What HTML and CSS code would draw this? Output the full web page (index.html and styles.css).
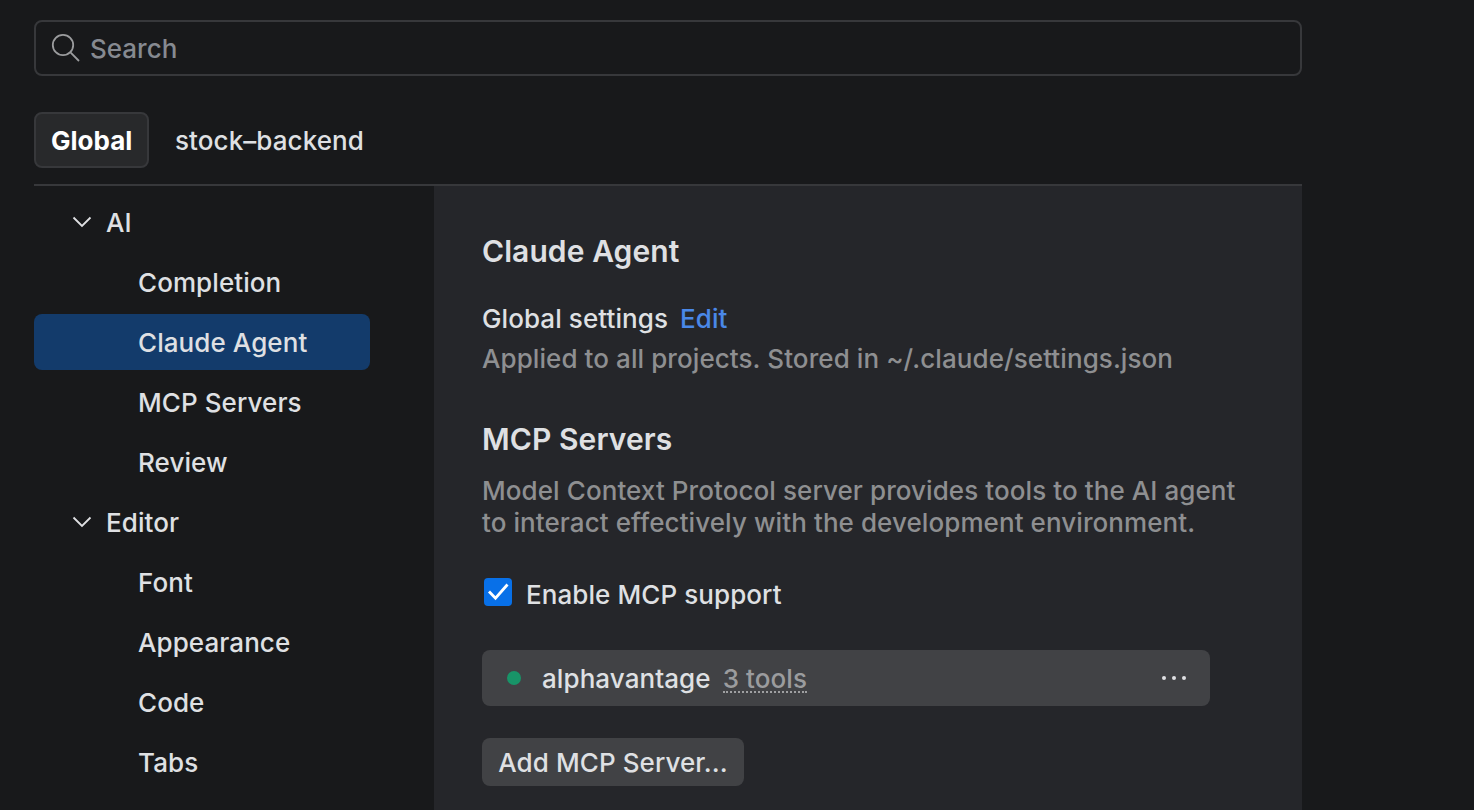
FILE: index.html
```
<!DOCTYPE html>
<html lang="en">
<head>
    <meta charset="UTF-8">
    <meta name="viewport" content="width=device-width, initial-scale=1.0">
    <title>Settings</title>
    <link rel="stylesheet" href="styles.css">
</head>
<body>
    <div class="settings">
        <label class="search">
            <svg class="search-icon" width="32" height="32" viewBox="0 0 32 32">
                <circle cx="13" cy="13" r="10.2"/>
                <path d="M20.2 20.2L29 29"/>
            </svg>
            <input type="text" placeholder="Search">
        </label>
        <nav class="scopes">
            <a class="scope active">Global</a>
            <a class="scope">stock–backend</a>
        </nav>
        <div class="main">
            <div class="tree">
                <div class="row group">
                    <svg class="chevron" width="20" height="12" viewBox="0 0 20 12"><path d="M1.5 1.5L10 10L18.5 1.5"/></svg>
                    <span>AI</span>
                </div>
                <div class="row">Completion</div>
                <div class="row selected">Claude Agent</div>
                <div class="row">MCP Servers</div>
                <div class="row">Review</div>
                <div class="row group">
                    <svg class="chevron" width="20" height="12" viewBox="0 0 20 12"><path d="M1.5 1.5L10 10L18.5 1.5"/></svg>
                    <span>Editor</span>
                </div>
                <div class="row">Font</div>
                <div class="row">Appearance</div>
                <div class="row">Code</div>
                <div class="row">Tabs</div>
            </div>
            <div class="page">
                <h2>Claude Agent</h2>
                <p class="setting">Global settings <a class="link">Edit</a></p>
                <p class="hint path">Applied to all projects. Stored in ~/.claude/settings.json</p>
                <h2>MCP Servers</h2>
                <p class="hint">Model Context Protocol server provides tools to the AI agent<br>to interact effectively with the development environment.</p>
                <div class="check">
                    <span class="checkbox">
                        <svg width="28" height="28" viewBox="0 0 28 28"><path d="M5 13.5L11.5 20.2L23.5 6.5"/></svg>
                    </span>
                    <span>Enable MCP support</span>
                </div>
                <div class="server">
                    <span class="status"></span>
                    <span class="name">alphavantage</span>
                    <span class="tools">3 tools</span>
                    <svg class="more" width="24" height="4" viewBox="0 0 24 4">
                        <circle cx="2" cy="2" r="2"/>
                        <circle cx="12" cy="2" r="2"/>
                        <circle cx="22" cy="2" r="2"/>
                    </svg>
                </div>
                <button class="add">Add MCP Server...</button>
            </div>
        </div>
    </div>
</body>
</html>
```
FILE: styles.css
```
* {
    box-sizing: border-box;
}
body {
    margin: 0;
    height: 100vh;
    overflow: hidden;
    background-color: #18191b;
    color: #dfe0e3;
    font-family: Inter, sans-serif;
    font-size: 26px;
    font-weight: 500;
    line-height: 32px;
    letter-spacing: 0.08px;
}
h2, p {
    margin: 0;
}
.settings {
    display: flex;
    flex-direction: column;
    width: 1268px;
    height: 100vh;
    margin-left: 34px;
    padding-top: 20px;
}
.search {
    display: flex;
    align-items: center;
    flex-shrink: 0;
    height: 56px;
    padding-left: 14px;
    border: 2px solid #37383b;
    border-radius: 8px;
}
.search-icon {
    fill: none;
    stroke: #9b9c9e;
    stroke-width: 1.8;
}
.search input {
    flex: 1;
    margin-left: 8px;
    padding: 2px 0 0;
    border: none;
    outline: none;
    background: none;
    color: inherit;
    font: inherit;
}
.search input::placeholder {
    color: #868a91;
}
.scopes {
    display: flex;
    flex-shrink: 0;
    margin-top: 36px;
    padding-bottom: 16px;
    border-bottom: 2px solid #37383b;
}
.scope {
    height: 56px;
    padding: 13px 26px;
}
.scope.active {
    width: 115px;
    padding: 11px 15px;
    border: 2px solid #37383b;
    border-radius: 8px;
    background-color: #28292b;
    color: #ffffff;
    font-weight: 700;
    letter-spacing: 0;
}
.main {
    display: flex;
    flex: 1;
    min-height: 0;
}
.tree {
    display: flex;
    flex-direction: column;
    gap: 4px;
    width: 400px;
    padding-top: 8px;
}
.row {
    flex-shrink: 0;
    width: 336px;
    height: 56px;
    padding: 13px 0 0 104px;
    border-radius: 8px;
}
.row.selected {
    background-color: #133b6b;
}
.row.group {
    display: flex;
    gap: 14px;
    padding-left: 38px;
}
.chevron {
    margin-top: 9px;
    fill: none;
    stroke: #dfe0e3;
    stroke-width: 1.8;
}
.page {
    flex: 1;
    padding: 45px 48px 0;
    background-color: #25262a;
}
h2 {
    font-size: 30px;
    font-weight: 600;
    line-height: 40px;
}
.setting {
    margin-top: 32px;
}
.link {
    margin-left: 5px;
    color: #4a88e8;
}
.hint {
    margin-top: 16px;
    color: #8e8f91;
}
.path {
    margin: 8px 0 44px;
}
.check {
    display: flex;
    gap: 14px;
    margin-top: 40px;
    padding-left: 2px;
}
.checkbox {
    width: 28px;
    height: 28px;
    margin-top: -1px;
    border-radius: 4px;
    background-color: #0870e8;
}
.checkbox svg {
    display: block;
    fill: none;
    stroke: #ffffff;
    stroke-width: 2.8;
}
.server {
    display: flex;
    align-items: center;
    width: 728px;
    height: 56px;
    margin-top: 39px;
    padding: 0 24px 0 25px;
    border-radius: 8px;
    background-color: #414245;
}
.status {
    width: 14px;
    height: 14px;
    border-radius: 50%;
    background-color: #189468;
}
.name {
    margin: 2px 0 0 21px;
}
.tools {
    height: 28px;
    margin: 2px 0 0 12px;
    border-bottom: 2px dotted #9fa0a2;
    line-height: 28px;
    color: #9b9c9e;
}
.more {
    margin-left: auto;
    fill: #dfe0e3;
}
.add {
    display: block;
    width: 262px;
    height: 48px;
    margin-top: 32px;
    padding: 2px 0 0;
    border: none;
    border-radius: 8px;
    background-color: #414245;
    color: inherit;
    font: inherit;
    letter-spacing: inherit;
}
```
